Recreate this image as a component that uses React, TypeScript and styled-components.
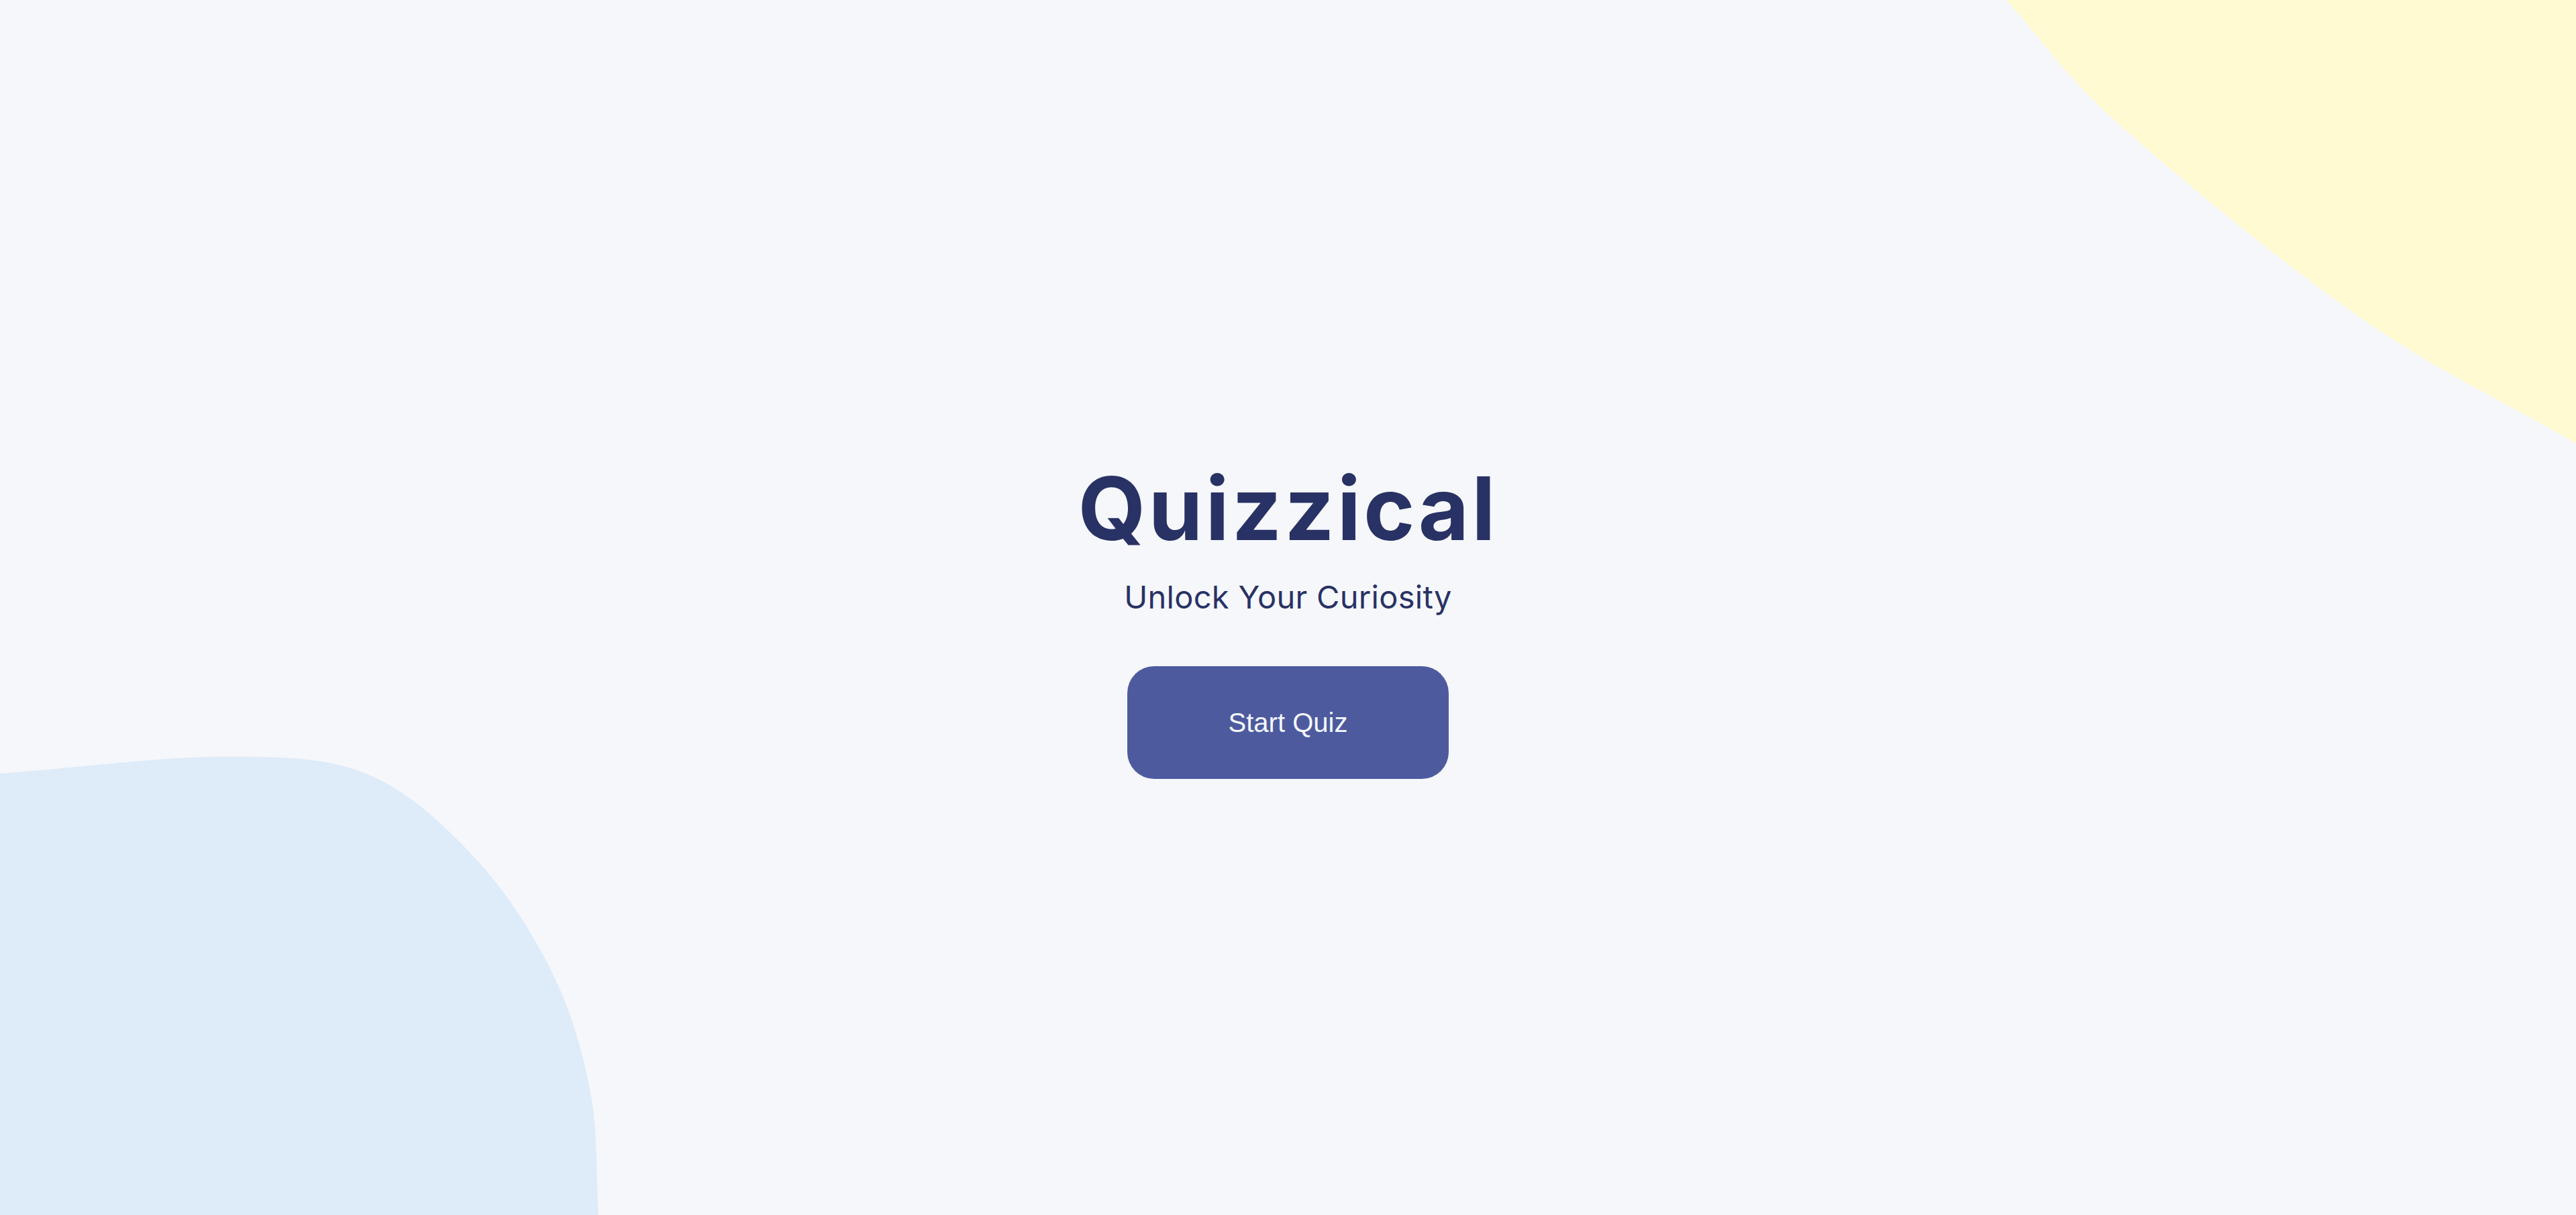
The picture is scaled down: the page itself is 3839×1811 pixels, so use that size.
import React from "react";
import styled, { createGlobalStyle } from "styled-components";

const GlobalStyle = createGlobalStyle`
  html, body {
    margin: 0;
    padding: 0;
    background: #f5f7fb;
  }
  body {
    font-family: Inter, "Noto Sans", sans-serif;
    overflow: hidden;
  }
  * { box-sizing: border-box; }
`;

const Page = styled.main`
  position: relative;
  min-height: 100vh;
  display: flex;
  flex-direction: column;
  align-items: center;
  justify-content: center;
  padding-top: 30px;
  background: #f5f7fb;
  overflow: hidden;
`;

const Blob = styled.svg<{ $corner: "top-right" | "bottom-left" }>`
  position: absolute;
  display: block;
  pointer-events: none;
  ${(p) =>
    p.$corner === "top-right"
      ? "top: 0; right: 0; width: 849px; height: 661px;"
      : "bottom: 0; left: 0; width: 892px; height: 683px;"}
`;

const Intro = styled.section`
  position: relative;
  z-index: 1;
  display: flex;
  flex-direction: column;
  align-items: center;
`;

const Title = styled.h1`
  margin: 0;
  font-family: Inter, "Noto Sans", sans-serif;
  font-weight: 700;
  font-size: 130px;
  line-height: 1.2;
  letter-spacing: 4px;
  color: #293264;
`;

const Subtitle = styled.p`
  margin: 26px 0 0;
  font-family: Inter, "Noto Sans", sans-serif;
  font-weight: 400;
  font-size: 47px;
  line-height: 1.2;
  letter-spacing: 0.3px;
  color: #293264;
`;

const StartButton = styled.button`
  margin-top: 75px;
  width: 479px;
  height: 168px;
  border: none;
  border-radius: 40px;
  background: #4d5b9e;
  color: #f5f7fb;
  font-family: "Liberation Sans", Arial, sans-serif;
  font-size: 40px;
  cursor: pointer;
`;

type Pt = [number, number];

// Smooth curve through points (Catmull-Rom converted to cubic Béziers,
// with reflected end points so the ends keep their natural direction)
function smoothPath(pts: Pt[]): string {
  const r = (n: number) => Math.round(n * 10) / 10;
  const n = pts.length;
  const first: Pt = [2 * pts[0][0] - pts[1][0], 2 * pts[0][1] - pts[1][1]];
  const last: Pt = [2 * pts[n - 1][0] - pts[n - 2][0], 2 * pts[n - 1][1] - pts[n - 2][1]];
  let d = `M ${pts[0][0]} ${pts[0][1]}`;
  for (let i = 0; i < n - 1; i++) {
    const p0 = i === 0 ? first : pts[i - 1];
    const p1 = pts[i];
    const p2 = pts[i + 1];
    const p3 = i + 2 < n ? pts[i + 2] : last;
    const c1: Pt = [p1[0] + (p2[0] - p0[0]) / 6, p1[1] + (p2[1] - p0[1]) / 6];
    const c2: Pt = [p2[0] - (p3[0] - p1[0]) / 6, p2[1] - (p3[1] - p1[1]) / 6];
    d += ` C ${r(c1[0])} ${r(c1[1])}, ${r(c2[0])} ${r(c2[1])}, ${p2[0]} ${p2[1]}`;
  }
  return d;
}

const yellowEdge: Pt[] = [
  [0, 0],
  [170, 187],
  [527, 473],
  [849, 661],
];

const blueEdge: Pt[] = [
  [0, 25],
  [330, 0],
  [545, 25],
  [707, 150],
  [823, 322],
  [880, 501],
  [892, 683],
];

const yellowPath = `${smoothPath(yellowEdge)} L 849 0 Z`;
const bluePath = `${smoothPath(blueEdge)} L 0 683 Z`;

export default function App() {
  return (
    <>
      <GlobalStyle />
      <Page>
        <Blob $corner="top-right" viewBox="0 0 849 661" aria-hidden="true">
          <path d={yellowPath} fill="#fffad1" />
        </Blob>
        <Blob $corner="bottom-left" viewBox="0 0 892 683" aria-hidden="true">
          <path d={bluePath} fill="#deebf8" />
        </Blob>
        <Intro>
          <Title>Quizzical</Title>
          <Subtitle>Unlock Your Curiosity</Subtitle>
          <StartButton>Start Quiz</StartButton>
        </Intro>
      </Page>
    </>
  );
}
